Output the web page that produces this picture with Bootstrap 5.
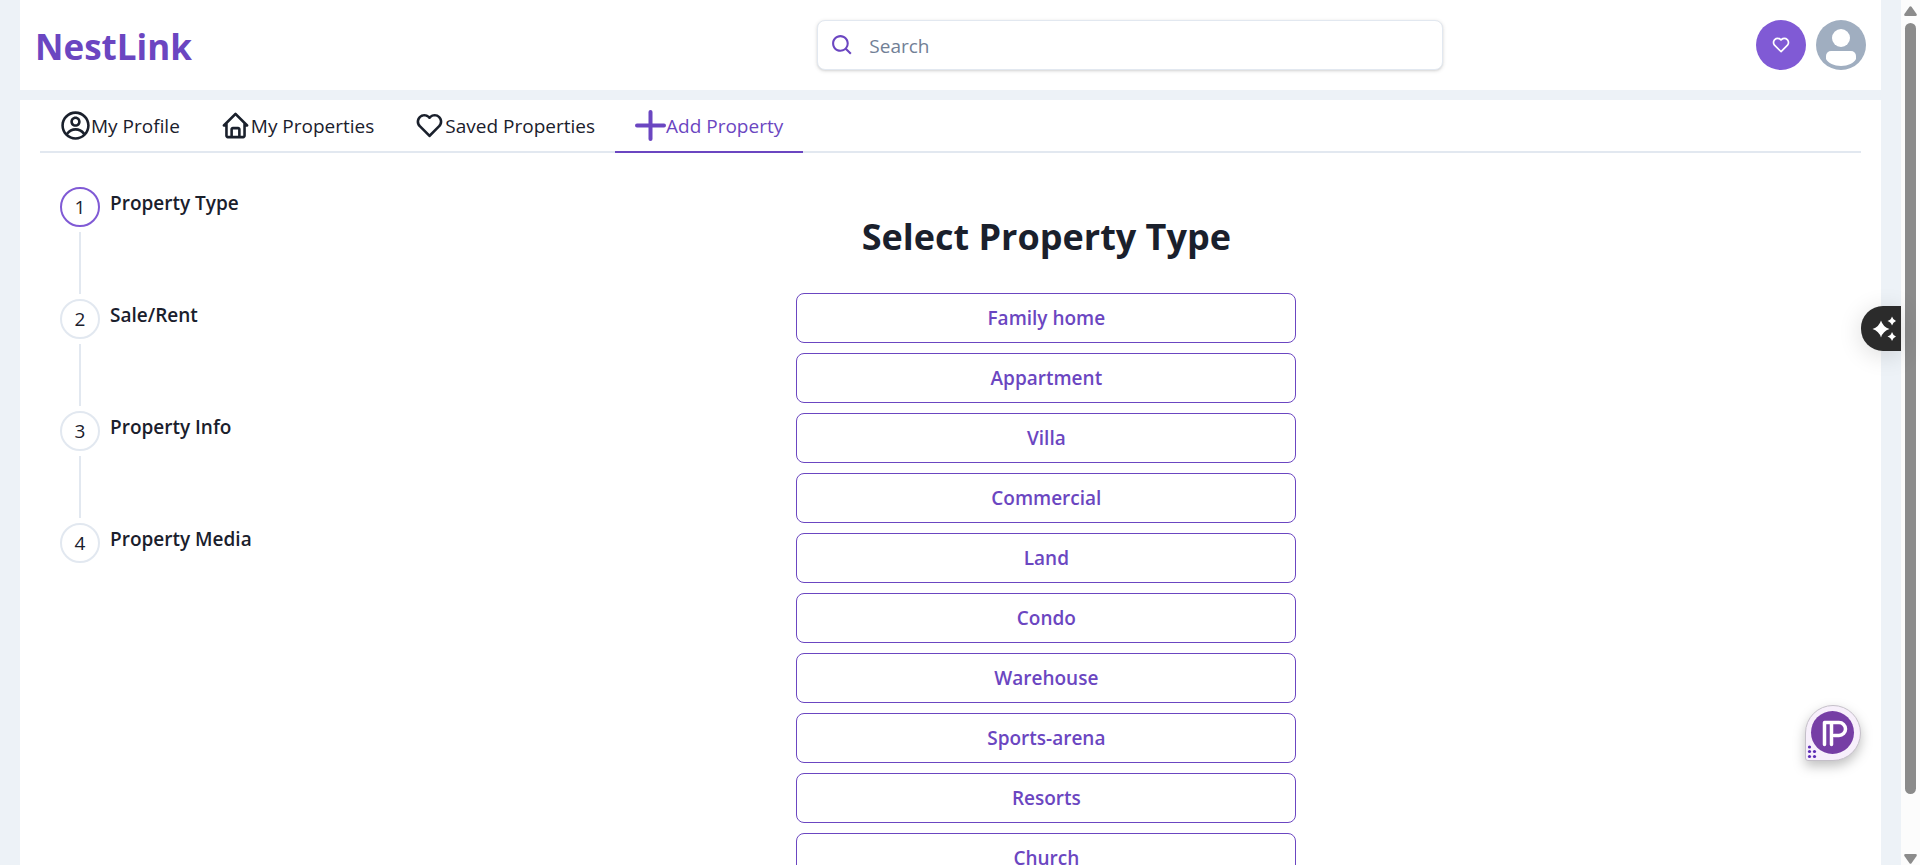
<!DOCTYPE html>
<html lang="en">
<head>
<meta charset="utf-8">
<meta name="viewport" content="width=device-width, initial-scale=1">
<title>NestLink</title>
<link href="https://cdn.jsdelivr.net/npm/bootstrap@5.3.0/dist/css/bootstrap.min.css" rel="stylesheet">
<style>
  :root { --brand: #6b46c1; --brand-soft: #805ad5; --ink: #1a202c; --line: #e2e8f0; --page: #edf2f7; }
  body { font-family: "Open Sans", "Noto Sans", sans-serif; font-size: 19px; line-height: 30px; color: var(--ink); background: var(--page); }
  .viewport { padding: 0 20px; min-width: 0; }
  .topbar { height: 90px; padding: 0 15px; margin-bottom: 10px; }
  .brand { flex: 2 1 auto; font-size: 35px; line-height: 45px; padding-top: 3px; color: var(--brand); }
  .brand:hover { color: var(--brand); }
  .search { flex: 0 0 626px; border: 1px solid var(--line); border-radius: 8px; box-shadow: 0 1px 4px rgba(0,0,0,.12), 0 1px 2px rgba(0,0,0,.08); height: 50px; padding: 0 12px; gap: 14px; }
  .search svg { fill: var(--brand); }
  .search .form-control { font-size: 19px; line-height: 30px; padding: 2px 0 0; }
  .search .form-control::placeholder { color: #718096; opacity: 1; }
  .actions { flex: 1 1 auto; gap: 10px; }
  .round-btn { width: 50px; height: 50px; background: var(--brand-soft); }
  .round-btn svg { fill: #fff; }
  .panel { padding: 0 20px; }
  .tabs { border-bottom: 2px solid var(--line); }
  .tabs .nav-link { color: var(--ink); padding: 10px 20px; margin-bottom: -2px; border-bottom: 2px solid transparent; }
  .tabs .nav-link svg { fill: currentColor; }
  .tabs .nav-link span { padding-top: 1px; }
  .tabs .nav-link.active { color: var(--brand); border-bottom-color: currentColor; }
  .content { padding: 34px 20px 20px; }
  .steps { flex: 0 0 191px; }
  .step { gap: 10px; }
  .step-rail { gap: 5px; }
  .step-no { width: 40px; height: 40px; border: 2px solid var(--line); }
  .step.current .step-no { border-color: var(--brand-soft); }
  .step-line { width: 2px; height: 62px; background: var(--line); margin-bottom: 5px; }
  .step-title { font-weight: 600; line-height: 32px; }
  h1 { font-size: 36px; line-height: 45px; margin: 27px 0 34px; }
  .choices { width: 500px; gap: 10px; }
  .choices .btn { height: 50px; font-size: 19px; line-height: 30px; border-color: var(--brand); color: var(--brand); border-radius: 8px; font-weight: 600; }
  .choices .btn:hover { background: #faf5ff; }
  .scroll-rail { width: 19px; background: #fcfcfc; padding: 6px 0 1px; }
  .scroll-rail svg { fill: #8b8b8b; }
  .scroll-thumb { width: 11px; flex: 0 0 771px; border-radius: 6px; background: #8b8b8b; margin-top: 7px; }
  .assist { position: fixed; right: 19px; top: 306px; width: 40px; height: 45px; background: #2b2b2b; border-radius: 22px 0 0 22px; box-shadow: 0 4px 24px rgba(0,0,0,.14); }
  .pip { position: fixed; right: 59px; bottom: 104px; filter: drop-shadow(0 5px 6px rgba(0,0,0,.25)); }
</style>
</head>
<body class="vh-100 overflow-hidden d-flex">
<div class="viewport flex-grow-1 vh-100 overflow-hidden d-flex flex-column">
  <header class="topbar bg-white d-flex align-items-center flex-shrink-0">
    <a href="#" class="brand fw-bold text-decoration-none">NestLink</a>
    <form class="search bg-white d-flex align-items-center" role="search">
      <svg width="25" height="25" viewBox="0 0 24 24" class="flex-shrink-0" aria-hidden="true"><path d="M10 18a7.952 7.952 0 0 0 4.897-1.688l4.396 4.396 1.414-1.414-4.396-4.396A7.952 7.952 0 0 0 18 10c0-4.411-3.589-8-8-8s-8 3.589-8 8 3.589 8 8 8zm0-14c3.309 0 6 2.691 6 6s-2.691 6-6 6-6-2.691-6-6 2.691-6 6-6z"/></svg>
      <input type="search" class="form-control border-0 shadow-none bg-transparent" placeholder="Search" aria-label="Search">
    </form>
    <div class="actions d-flex justify-content-end">
      <button type="button" class="round-btn btn rounded-circle border-0 p-0 d-flex align-items-center justify-content-center" aria-label="Saved">
        <svg width="20" height="20" viewBox="0 0 24 24"><path d="M12 4.595a5.904 5.904 0 0 0-3.996-1.558 5.942 5.942 0 0 0-4.213 1.758c-2.353 2.363-2.352 6.059.002 8.412l7.332 7.332c.17.299.498.492.875.492a.99.99 0 0 0 .792-.409l7.415-7.415c2.354-2.354 2.354-6.049-.002-8.416a5.938 5.938 0 0 0-4.209-1.754A5.906 5.906 0 0 0 12 4.595zm6.791 1.61c1.563 1.571 1.564 4.025.002 5.588L12 18.586l-6.793-6.793c-1.562-1.563-1.561-4.017-.002-5.584.76-.756 1.754-1.172 2.799-1.172s2.035.416 2.789 1.17l.5.5a.999.999 0 0 0 1.414 0l.5-.5c1.512-1.509 4.074-1.505 5.584-.002z"/></svg>
      </button>
      <button type="button" class="btn rounded-circle border-0 p-0 d-flex" aria-label="Account">
        <svg width="50" height="50" viewBox="0 0 50 50"><circle cx="25" cy="25" r="25" fill="#a0aec0"/><g fill="#fff"><circle cx="25" cy="18" r="9"/><path d="M15 31h20a5 5 0 0 1 5 5v3c-2 4-8 7-15 7s-13-3-15-7v-3a5 5 0 0 1 5-5z"/></g></svg>
      </button>
    </div>
  </header>

  <main class="panel bg-white flex-grow-1">
    <nav class="tabs nav" aria-label="Account sections">
      <a href="#" class="nav-link d-flex align-items-center">
        <svg width="31" height="31" viewBox="0 0 24 24"><path fill-rule="evenodd" d="M16 9C16 11.2091 14.2091 13 12 13C9.79086 13 8 11.2091 8 9C8 6.79086 9.79086 5 12 5C14.2091 5 16 6.79086 16 9ZM14 9C14 10.1046 13.1046 11 12 11C10.8954 11 10 10.1046 10 9C10 7.89543 10.8954 7 12 7C13.1046 7 14 7.89543 14 9Z"/><path fill-rule="evenodd" d="M12 1C5.92487 1 1 5.92487 1 12C1 18.0751 5.92487 23 12 23C18.0751 23 23 18.0751 23 12C23 5.92487 18.0751 1 12 1ZM3 12C3 14.0902 3.71255 16.014 4.90798 17.5417C6.55245 15.3889 9.14627 14 12.0645 14C14.9448 14 17.5092 15.3531 19.1565 17.4583C20.313 15.9443 21 14.0524 21 12C21 7.02944 16.9706 3 12 3C7.02944 3 3 7.02944 3 12ZM12 21C9.84977 21 7.87565 20.2459 6.32767 18.9878C7.59352 17.1812 9.69106 16 12.0645 16C14.4084 16 16.4833 17.1521 17.7538 18.9209C16.1939 20.2191 14.1881 21 12 21Z"/></svg><span>My Profile</span></a>
      <a href="#" class="nav-link d-flex align-items-center">
        <svg width="31" height="31" viewBox="0 0 24 24"><path d="M3 13h1v7c0 1.103.897 2 2 2h12c1.103 0 2-.897 2-2v-7h1a1 1 0 0 0 .707-1.707l-9-9a.999.999 0 0 0-1.414 0l-9 9A1 1 0 0 0 3 13zm7 7v-5h4v5h-4zm2-15.586 6 6V15l.001 5H16v-5c0-1.103-.897-2-2-2h-4c-1.103 0-2 .897-2 2v5H6v-9.586l6-6z"/></svg><span>My Properties</span></a>
      <a href="#" class="nav-link d-flex align-items-center">
        <svg width="31" height="31" viewBox="0 0 24 24"><path d="M12 4.595a5.904 5.904 0 0 0-3.996-1.558 5.942 5.942 0 0 0-4.213 1.758c-2.353 2.363-2.352 6.059.002 8.412l7.332 7.332c.17.299.498.492.875.492a.99.99 0 0 0 .792-.409l7.415-7.415c2.354-2.354 2.354-6.049-.002-8.416a5.938 5.938 0 0 0-4.209-1.754A5.906 5.906 0 0 0 12 4.595zm6.791 1.61c1.563 1.571 1.564 4.025.002 5.588L12 18.586l-6.793-6.793c-1.562-1.563-1.561-4.017-.002-5.584.76-.756 1.754-1.172 2.799-1.172s2.035.416 2.789 1.17l.5.5a.999.999 0 0 0 1.414 0l.5-.5c1.512-1.509 4.074-1.505 5.584-.002z"/></svg><span>Saved Properties</span></a>
      <a href="#" class="nav-link active d-flex align-items-center" aria-current="page">
        <svg width="31" height="31" viewBox="0 0 31 31"><rect x="0" y="13.5" width="31" height="4" rx="2"/><rect x="13.5" y="0" width="4" height="31" rx="2"/></svg><span>Add Property</span></a>
    </nav>

    <div class="content d-flex">
      <ol class="steps list-unstyled mb-0">
        <li class="step current d-flex" aria-current="step"><div class="step-rail d-flex flex-column align-items-center"><span class="step-no rounded-circle d-flex align-items-center justify-content-center">1</span><span class="step-line"></span></div><span class="step-title">Property Type</span></li>
        <li class="step d-flex"><div class="step-rail d-flex flex-column align-items-center"><span class="step-no rounded-circle d-flex align-items-center justify-content-center">2</span><span class="step-line"></span></div><span class="step-title">Sale/Rent</span></li>
        <li class="step d-flex"><div class="step-rail d-flex flex-column align-items-center"><span class="step-no rounded-circle d-flex align-items-center justify-content-center">3</span><span class="step-line"></span></div><span class="step-title">Property Info</span></li>
        <li class="step d-flex"><div class="step-rail d-flex flex-column align-items-center"><span class="step-no rounded-circle d-flex align-items-center justify-content-center">4</span></div><span class="step-title text-nowrap">Property Media</span></li>
      </ol>
      <section class="flex-grow-1 d-flex flex-column align-items-center">
        <h1 class="fw-bold">Select Property Type</h1>
        <div class="choices d-flex flex-column mw-100">
          <button type="button" class="btn">Family home</button>
          <button type="button" class="btn">Appartment</button>
          <button type="button" class="btn">Villa</button>
          <button type="button" class="btn">Commercial</button>
          <button type="button" class="btn">Land</button>
          <button type="button" class="btn">Condo</button>
          <button type="button" class="btn">Warehouse</button>
          <button type="button" class="btn">Sports-arena</button>
          <button type="button" class="btn">Resorts</button>
          <button type="button" class="btn">Church</button>
        </div>
      </section>
    </div>
  </main>
</div>

<div class="scroll-rail vh-100 d-flex flex-column align-items-center flex-shrink-0" aria-hidden="true">
  <svg width="13" height="10" viewBox="0 0 13 10"><path d="M5.5.8Q6.5-.4 7.5.8L12.600 8Q13.300 10 11.500 10H1.500Q-.3 10 .4 8z"/></svg>
  <span class="scroll-thumb"></span>
  <svg class="mt-auto" width="13" height="10" viewBox="0 0 13 10"><path d="M5.500 9.200Q6.500 10.400 7.500 9.200L12.600 2Q13.300 0 11.500 0H1.500Q-.3 0 .4 2z"/></svg>
</div>

<button type="button" class="assist btn border-0 p-0 d-flex align-items-center justify-content-center" aria-label="Assistant">
  <svg width="30" height="30" viewBox="0 0 30 30" fill="#fff"><path d="M15 6.500Q17 13 23.500 15Q17 17 15 23.500Q13 17 6.500 15Q13 13 15 6.500zM26 2.500Q27 6 30 7Q27 8 26 11.500Q25 8 21.500 7Q25 6 26 2.500zM26 18Q27 21.500 30 22.500Q27 23.500 26 27Q25 23.500 21.500 22.500Q25 21.500 26 18z"/></svg>
</button>
<button type="button" class="pip btn border-0 p-0 d-flex" aria-label="Open widget">
  <svg width="56" height="56" viewBox="0 0 56 56"><path d="M28 .5A27.500 27.500 0 0 1 28 55.500H3Q.5 55.500 .5 53V28A27.500 27.500 0 0 1 28 .5z" fill="#f7effb" stroke="#c4bfc8"/><circle cx="27.500" cy="27.500" r="21.500" fill="#763ea5"/><path d="M19.500 39.500V17.500H34a6.500 6.500 0 0 1 0 13H29M26.500 17.500V39.500" fill="none" stroke="#fff" stroke-width="3.500" stroke-linecap="round" stroke-linejoin="round"/><g fill="#5b2bb5"><circle cx="4.500" cy="42" r="1.600"/><circle cx="4.500" cy="46.500" r="1.600"/><circle cx="9.500" cy="46.500" r="1.600"/><circle cx="4.500" cy="51.500" r="1.600"/><circle cx="9.500" cy="51.500" r="1.600"/></g></svg>
</button>
<script src="https://cdn.jsdelivr.net/npm/bootstrap@5.3.0/dist/js/bootstrap.bundle.min.js"></script>
</body>
</html>
